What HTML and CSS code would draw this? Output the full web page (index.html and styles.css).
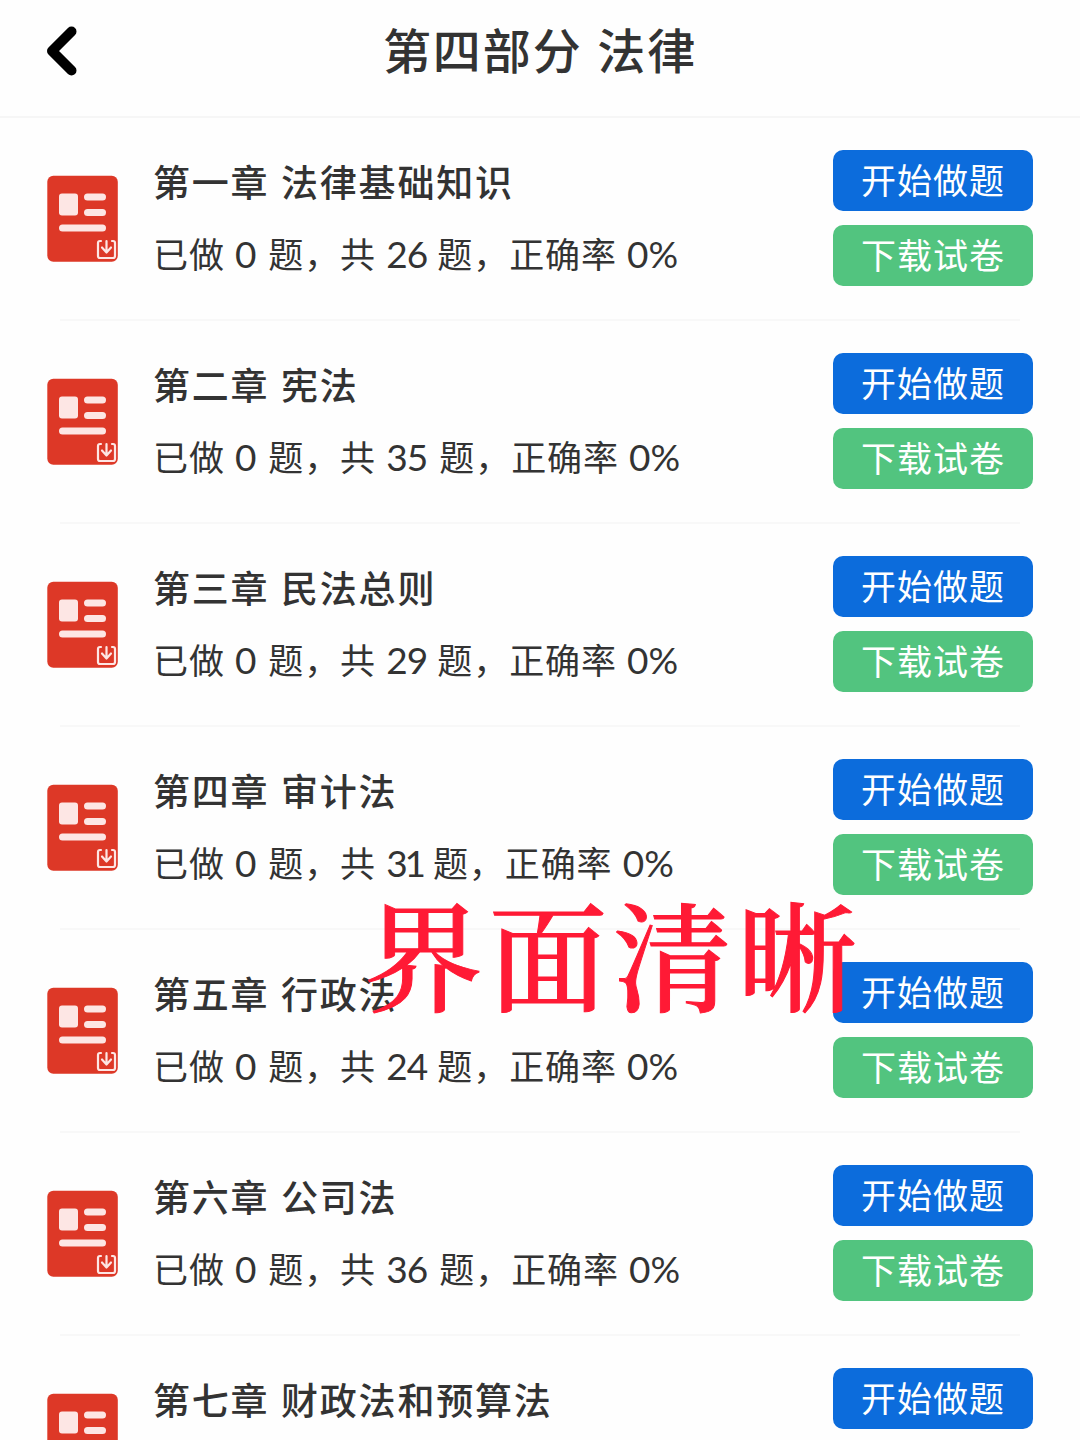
FILE: index.html
```html
<!DOCTYPE html>
<html lang="zh-CN">
<head>
    <meta charset="UTF-8">
    <meta name="viewport" content="width=device-width, initial-scale=1.0">
    <title>第四部分 法律</title>
    <link rel="stylesheet" href="styles.css">
</head>
<body>

<!-- Shared paper icon -->
<svg class="icon-defs" width="0" height="0">
    <symbol id="paper" viewBox="0 0 72 88">
        <rect x="0.3" y="0.7" width="70.5" height="86" rx="6" fill="#dd3827"/>
        <rect x="12" y="18.5" width="19" height="22" rx="3" fill="#fde6e4"/>
        <rect x="37" y="18.5" width="22" height="7" rx="3.5" fill="#fde6e4"/>
        <rect x="37" y="34" width="22" height="7" rx="3.5" fill="#fde6e4"/>
        <rect x="12" y="49.5" width="47" height="7" rx="3.5" fill="#fde6e4"/>
        <g fill="none" stroke="#fde6e4" stroke-width="2.2" stroke-linecap="round" stroke-linejoin="round">
            <path d="M54 66h-1q-2 0-2 2v13q0 2 2 2h13q2 0 2-2V68q0-2-2-2h-1"/>
            <path d="M59.500 66v11M55 72.500l4.500 5 4.500-5"/>
        </g>
    </symbol>
</svg>

<header class="header">
    <svg class="back" viewBox="0 0 30 50"><path d="M24.500 5.500L5 25l19.500 19.500" fill="none" stroke="#000" stroke-width="10" stroke-linecap="round" stroke-linejoin="round"/></svg>
    <h1>第四部分 法律</h1>
</header>

<main class="list">
    <section class="chapter">
        <svg class="icon"><use href="#paper"/></svg>
        <div class="info">
            <h2>第一章 法律基础知识</h2>
            <p>已做 <b class="done">0</b> 题，共 <b>26</b> 题，正确率 <b class="rate">0%</b></p>
        </div>
        <div class="actions">
            <button class="start">开始做题</button>
            <button class="download">下载试卷</button>
        </div>
    </section>
    <section class="chapter">
        <svg class="icon"><use href="#paper"/></svg>
        <div class="info">
            <h2>第二章 宪法</h2>
            <p>已做 <b class="done">0</b> 题，共 <b class="wide">35</b> 题，正确率 <b class="rate">0%</b></p>
        </div>
        <div class="actions">
            <button class="start">开始做题</button>
            <button class="download">下载试卷</button>
        </div>
    </section>
    <section class="chapter">
        <svg class="icon"><use href="#paper"/></svg>
        <div class="info">
            <h2>第三章 民法总则</h2>
            <p>已做 <b class="done">0</b> 题，共 <b>29</b> 题，正确率 <b class="rate">0%</b></p>
        </div>
        <div class="actions">
            <button class="start">开始做题</button>
            <button class="download">下载试卷</button>
        </div>
    </section>
    <section class="chapter">
        <svg class="icon"><use href="#paper"/></svg>
        <div class="info">
            <h2>第四章 审计法</h2>
            <p>已做 <b class="done">0</b> 题，共 <b class="narrow">31</b> 题，正确率 <b class="rate">0%</b></p>
        </div>
        <div class="actions">
            <button class="start">开始做题</button>
            <button class="download">下载试卷</button>
        </div>
    </section>
    <section class="chapter">
        <svg class="icon"><use href="#paper"/></svg>
        <div class="info">
            <h2>第五章 行政法</h2>
            <p>已做 <b class="done">0</b> 题，共 <b>24</b> 题，正确率 <b class="rate">0%</b></p>
        </div>
        <div class="actions">
            <button class="start">开始做题</button>
            <button class="download">下载试卷</button>
        </div>
    </section>
    <section class="chapter">
        <svg class="icon"><use href="#paper"/></svg>
        <div class="info">
            <h2>第六章 公司法</h2>
            <p>已做 <b class="done">0</b> 题，共 <b class="wide">36</b> 题，正确率 <b class="rate">0%</b></p>
        </div>
        <div class="actions">
            <button class="start">开始做题</button>
            <button class="download">下载试卷</button>
        </div>
    </section>
    <section class="chapter">
        <svg class="icon"><use href="#paper"/></svg>
        <div class="info">
            <h2>第七章 财政法和预算法</h2>
        </div>
        <div class="actions">
            <button class="start">开始做题</button>
        </div>
    </section>
</main>

<div class="caption">界面清晰</div>

</body>
</html>
```
FILE: styles.css
```css
* {
    box-sizing: border-box;
}
body {
    margin: 0;
    position: relative;
    background-color: #fefefe;
    color: #333;
    font-family: "Noto Sans CJK SC", sans-serif;
}
.icon-defs {
    display: none;
}
.header {
    display: grid;
    grid-template-columns: 30px 1fr 30px;
    align-items: center;
    height: 118px;
    padding: 0 47px 14px;
    border-bottom: 2px solid #f6f6f6;
}
.back {
    width: 30px;
    height: 50px;
}
h1 {
    margin: 0 0 6px;
    font-size: 48px;
    line-height: 60px;
    font-weight: 500;
    letter-spacing: 1.9px;
    word-spacing: 2px;
    text-align: center;
}
.chapter {
    display: flex;
    height: 203px;
    padding: 32px 47px 0;
    background: linear-gradient(#f8f8f8, #f8f8f8) 60px 201px / 960px 2px no-repeat;
}
.chapter:last-child {
    height: 104px;
    overflow: hidden;
}
.icon {
    width: 72px;
    height: 88px;
    margin-top: 25px;
}
.info {
    flex: 1;
    padding-left: 34px;
    white-space: nowrap;
}
h2 {
    margin: 5px 0 0;
    font-size: 37px;
    line-height: 52px;
    font-weight: 500;
    letter-spacing: 1.8px;
    word-spacing: 1.5px;
}
p {
    margin: 20px 0 0;
    font-size: 35px;
    line-height: 52px;
    letter-spacing: 0.9px;
    word-spacing: 1.5px;
}
p b {
    font-family: Lato, sans-serif;
    font-size: 37px;
    font-weight: 400;
    letter-spacing: -1px;
}
.done {
    padding-right: 2.5px;
}
.wide {
    padding-right: 2px;
}
.narrow {
    letter-spacing: -3.2px;
}
.rate {
    letter-spacing: 0;
}
.actions {
    display: flex;
    flex-direction: column;
    gap: 14px;
}
button {
    width: 200px;
    height: 61px;
    padding: 0 0 4px;
    border: none;
    border-radius: 10px;
    color: #fff;
    font-family: inherit;
    font-size: 35px;
    line-height: 50px;
    letter-spacing: 1px;
}
.start {
    background-color: #0c6cdc;
}
.download {
    background-color: #52c47f;
}
/* Caption floating over the list */
.caption {
    position: absolute;
    left: 364px;
    top: 866px;
    color: #ff1a35;
    font-family: "Noto Serif CJK SC", "Source Han Serif SC", "Noto Sans CJK SC", serif;
    font-size: 119px;
    font-weight: 500;
    line-height: 172px;
    letter-spacing: 5.5px;
    white-space: nowrap;
    -webkit-text-stroke: 1px #ff1a35;
}
```
